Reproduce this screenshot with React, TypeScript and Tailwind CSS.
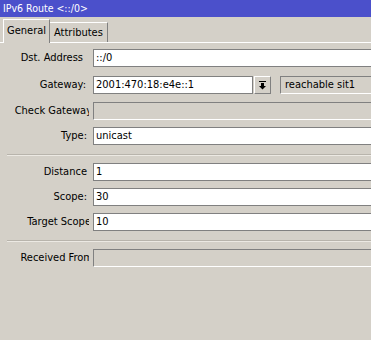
import React from 'react';

const FONT = "font-['DejaVu_Sans_Condensed','Liberation_Sans',sans-serif]";

function Label({ text, right = 88 }: { text: string; right?: number }) {
  // labels are right-aligned and clipped just before the field column
  return (
    <div className="relative h-[18px] w-[89px] shrink-0 overflow-hidden">
      <span
        className="absolute top-[1px] whitespace-nowrap text-[11px] leading-[16px] text-black"
        style={{ right: 89 - right }}
      >
        {text}
      </span>
    </div>
  );
}

function TextField({ value, className = '' }: { value: string; className?: string }) {
  return (
    <div
      className={`flex h-[18px] items-center border-t border-l border-b border-[#808080] bg-white pl-[2px] text-[11px] text-black ${className}`}
    >
      {value}
    </div>
  );
}

function EmptyField() {
  return (
    <div className="h-[18px] flex-1 border-t border-l border-[#808080] border-b border-b-white bg-[#d4d0c8]" />
  );
}

function Separator() {
  return (
    <div className="ml-[7px] flex flex-col">
      <div className="h-px bg-[#b8b4ac]" />
      <div className="h-px bg-[#ece9e3]" />
    </div>
  );
}

export default function App() {
  return (
    <div className={`flex h-[340px] w-[371px] flex-col overflow-hidden bg-[#d4d0c8] ${FONT}`}>
      <div className="flex h-[17px] shrink-0 items-center bg-[#4b50cb] pl-[3px] text-[10.5px] text-white">
        IPv6 Route &lt;::/0&gt;
      </div>

      {/* tabs */}
      <div className="relative flex h-[26px] shrink-0 items-end pl-[3px]">
        <div className="absolute bottom-0 left-0 right-0 h-px bg-white" />
        <div className="relative z-10 flex h-[24px] w-[47px] items-start border-t border-l border-white border-r border-r-[#808080] bg-[#d4d0c8] pl-[3px] pt-[4px] text-[11px] leading-[14px] text-black">
          General
        </div>
        <div className="mb-px flex h-[20px] w-[58px] items-start border-t border-white border-r border-r-[#808080] bg-[#d4d0c8] pl-[4px] pt-[3px] text-[11px] leading-[14px] text-black">
          Attributes
        </div>
      </div>

      <div className="flex flex-col">
        <div className="mt-[6px] flex gap-[4px]">
          <Label text="Dst. Address" right={83} />
          <TextField value="::/0" className="flex-1" />
        </div>

        <div className="mt-[9px] flex gap-[4px]">
          <Label text="Gateway:" right={86} />
          <TextField value="2001:470:18:e4e::1" className="w-[160px] border-r" />
          <div className="-ml-[3px] flex h-[18px] w-[17px] items-center justify-center border-t border-l border-white border-r border-b border-r-[#808080] border-b-[#808080]">
            <svg width="9" height="10" viewBox="0 0 9 10">
              <rect x="1" y="1" width="7" height="1" fill="#000" />
              <rect x="3" y="3" width="3" height="3" fill="#000" />
              <path d="M1 6 H8 L4.5 9.5 Z" fill="#000" />
            </svg>
          </div>
          <div className="ml-[5px] flex h-[18px] flex-1 items-center border-t border-l border-[#808080] border-b border-b-white bg-[#d4d0c8] pl-[4px] text-[11px] text-black">
            reachable sit1
          </div>
        </div>

        <div className="mt-[8px] flex gap-[4px]">
          <Label text="Check Gateway" right={92} />
          <EmptyField />
        </div>

        <div className="mt-[7px] flex gap-[4px]">
          <Label text="Type:" right={87} />
          <TextField value="unicast" className="flex-1" />
        </div>

        <div className="mt-[9px]">
          <Separator />
        </div>

        <div className="mt-[7px] flex gap-[4px]">
          <Label text="Distance" right={87} />
          <TextField value="1" className="flex-1" />
        </div>

        <div className="mt-[7px] flex gap-[4px]">
          <Label text="Scope:" right={87} />
          <TextField value="30" className="flex-1" />
        </div>

        <div className="mt-[7px] flex gap-[4px]">
          <Label text="Target Scope" right={91} />
          <TextField value="10" className="flex-1" />
        </div>

        <div className="mt-[9px]">
          <Separator />
        </div>

        <div className="mt-[7px] flex gap-[4px]">
          <Label text="Received From" right={93} />
          <EmptyField />
        </div>
      </div>
    </div>
  );
}
